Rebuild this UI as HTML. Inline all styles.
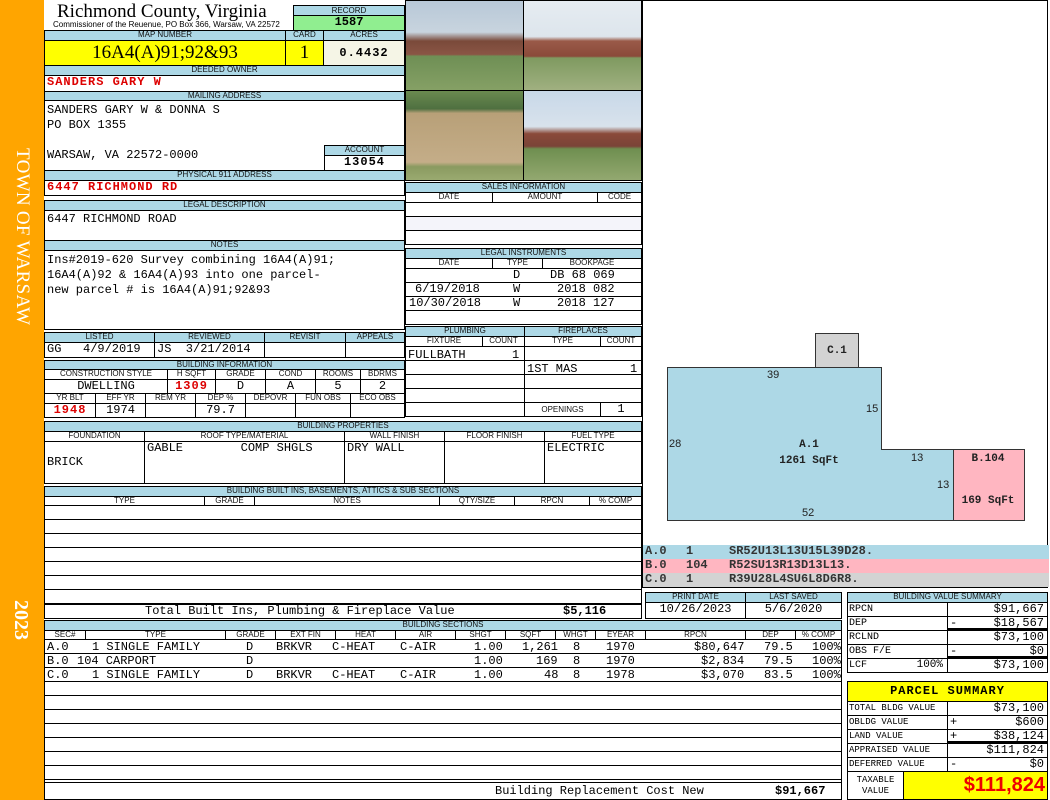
<!DOCTYPE html>
<html><head><meta charset="utf-8"><style>
*{margin:0;padding:0}
body{width:1050px;height:800px;position:relative;background:#fff;overflow:hidden;font-family:"Liberation Sans",sans-serif}
.b{position:absolute;box-sizing:border-box;border:1px solid #000;background:#fff;overflow:hidden;white-space:nowrap}
.h{background:#add8e6;font-size:8px;line-height:8px;text-align:center;color:#111}
.m{font-family:"Liberation Mono",monospace;font-size:12px;line-height:13px;padding-left:2px}
.r{color:#d00;font-weight:bold;letter-spacing:1px}
.c{text-align:center;padding-left:0}
.rt{text-align:right;padding-right:3px}
.t{position:absolute;white-space:nowrap}
</style></head><body>
<div style="position:absolute;left:0;top:0;width:44px;height:800px;background:#ffa500"></div>
<div class="t" style="left:22px;top:148px;transform-origin:0 0;transform:rotate(90deg) translate(0,-11px);font:19px 'Liberation Serif',serif;color:#fff;letter-spacing:0.3px">TOWN OF WARSAW</div>
<div class="t" style="left:32px;top:600px;transform-origin:0 0;transform:rotate(90deg);font:bold 20px 'Liberation Serif',serif;color:#fff">2023</div>

<!-- header -->
<div class="t" style="left:57px;top:1px;font:19px 'Liberation Serif',serif">Richmond County, Virginia</div>
<div class="t" style="left:53px;top:20px;font:8px 'Liberation Sans',sans-serif">Commissioner of the Reuenue, PO Box 366, Warsaw, VA 22572</div>
<div class="b h" style="left:293px;top:5px;width:112px;height:11px;line-height:9px">RECORD</div>
<div class="b m c" style="left:293px;top:15px;width:112px;height:16px;background:#90ee90;font-weight:bold">1587</div>
<div class="b h" style="left:44px;top:30px;width:242px;height:11px">MAP NUMBER</div>
<div class="b h" style="left:285px;top:30px;width:39px;height:11px">CARD</div>
<div class="b h" style="left:323px;top:30px;width:82px;height:11px">ACRES</div>
<div class="b c" style="left:44px;top:40px;width:242px;height:26px;background:#ffff00;font:19px 'Liberation Serif',serif;line-height:24px">16A4(A)91;92&amp;93</div>
<div class="b c" style="left:285px;top:40px;width:39px;height:26px;background:#ffff00;font:19px 'Liberation Serif',serif;line-height:24px">1</div>
<div class="b m c" style="left:323px;top:40px;width:82px;height:26px;background:#f5f5e6;font-weight:bold;line-height:24px;letter-spacing:1px">0.4432</div>
<div class="b h" style="left:44px;top:65px;width:361px;height:11px">DEEDED OWNER</div>
<div class="b m r" style="left:44px;top:75px;width:361px;height:17px">SANDERS GARY W</div>
<div class="b h" style="left:44px;top:91px;width:361px;height:10px">MAILING ADDRESS</div>
<div class="b m" style="left:44px;top:100px;width:361px;height:71px;line-height:15px;padding-top:2px">SANDERS GARY W &amp; DONNA S<br>PO BOX 1355<br><br>WARSAW, VA 22572-0000</div>
<div class="b h" style="left:324px;top:145px;width:81px;height:11px">ACCOUNT</div>
<div class="b m c" style="left:324px;top:155px;width:81px;height:16px;font-weight:bold;letter-spacing:1px">13054</div>
<div class="b h" style="left:44px;top:170px;width:361px;height:11px">PHYSICAL 911 ADDRESS</div>
<div class="b m r" style="left:44px;top:180px;width:361px;height:16px">6447 RICHMOND RD</div>
<div class="b h" style="left:44px;top:200px;width:361px;height:11px">LEGAL DESCRIPTION</div>
<div class="b m" style="left:44px;top:210px;width:361px;height:31px;padding-top:2px">6447 RICHMOND ROAD</div>
<div class="b h" style="left:44px;top:240px;width:361px;height:11px">NOTES</div>
<div class="b m" style="left:44px;top:250px;width:361px;height:80px;line-height:15px;padding-top:2px">Ins#2019-620 Survey combining 16A4(A)91;<br>16A4(A)92 &amp; 16A4(A)93 into one parcel-<br>new parcel # is 16A4(A)91;92&amp;93</div>

<div class="b h" style="left:44px;top:332px;width:111px;height:11px">LISTED</div>
<div class="b h" style="left:154px;top:332px;width:111px;height:11px">REVIEWED</div>
<div class="b h" style="left:264px;top:332px;width:82px;height:11px">REVISIT</div>
<div class="b h" style="left:345px;top:332px;width:60px;height:11px">APPEALS</div>
<div class="b m" style="left:44px;top:342px;width:111px;height:16px">GG&nbsp;&nbsp;&nbsp;4/9/2019</div>
<div class="b m" style="left:154px;top:342px;width:111px;height:16px">JS&nbsp;&nbsp;3/21/2014</div>
<div class="b" style="left:264px;top:342px;width:82px;height:16px"></div>
<div class="b" style="left:345px;top:342px;width:60px;height:16px"></div>

<div class="b h" style="left:44px;top:360px;width:361px;height:10px">BUILDING INFORMATION</div>
<div class="b h" style="left:44px;top:369px;width:124px;height:11px;background:#fff">CONSTRUCTION STYLE</div>
<div class="b h" style="left:167px;top:369px;width:49px;height:11px;background:#fff">H SQFT</div>
<div class="b h" style="left:215px;top:369px;width:51px;height:11px;background:#fff">GRADE</div>
<div class="b h" style="left:265px;top:369px;width:51px;height:11px;background:#fff">COND</div>
<div class="b h" style="left:315px;top:369px;width:46px;height:11px;background:#fff">ROOMS</div>
<div class="b h" style="left:360px;top:369px;width:45px;height:11px;background:#fff">BDRMS</div>
<div class="b m c" style="left:44px;top:379px;width:124px;height:15px">DWELLING</div>
<div class="b m c r" style="left:167px;top:379px;width:49px;height:15px">1309</div>
<div class="b m c" style="left:215px;top:379px;width:51px;height:15px">D</div>
<div class="b m c" style="left:265px;top:379px;width:51px;height:15px">A</div>
<div class="b m c" style="left:315px;top:379px;width:46px;height:15px">5</div>
<div class="b m c" style="left:360px;top:379px;width:45px;height:15px">2</div>
<div class="b h" style="left:44px;top:393px;width:52px;height:11px;background:#fff">YR BLT</div>
<div class="b h" style="left:95px;top:393px;width:51px;height:11px;background:#fff">EFF YR</div>
<div class="b h" style="left:145px;top:393px;width:51px;height:11px;background:#fff">REM YR</div>
<div class="b h" style="left:195px;top:393px;width:51px;height:11px;background:#fff">DEP %</div>
<div class="b h" style="left:245px;top:393px;width:51px;height:11px;background:#fff">DEPOVR</div>
<div class="b h" style="left:295px;top:393px;width:56px;height:11px;background:#fff">FUN OBS</div>
<div class="b h" style="left:350px;top:393px;width:55px;height:11px;background:#fff">ECO OBS</div>
<div class="b m c r" style="left:44px;top:403px;width:52px;height:15px">1948</div>
<div class="b m c" style="left:95px;top:403px;width:51px;height:15px">1974</div>
<div class="b" style="left:145px;top:403px;width:51px;height:15px"></div>
<div class="b m c" style="left:195px;top:403px;width:51px;height:15px">79.7</div>
<div class="b" style="left:245px;top:403px;width:51px;height:15px"></div>
<div class="b" style="left:295px;top:403px;width:56px;height:15px"></div>
<div class="b" style="left:350px;top:403px;width:55px;height:15px"></div>

<!-- building properties -->
<div class="b h" style="left:44px;top:421px;width:598px;height:11px">BUILDING PROPERTIES</div>
<div class="b h" style="left:44px;top:431px;width:101px;height:11px;background:#fff">FOUNDATION</div>
<div class="b h" style="left:144px;top:431px;width:201px;height:11px;background:#fff">ROOF TYPE/MATERIAL</div>
<div class="b h" style="left:344px;top:431px;width:101px;height:11px;background:#fff">WALL FINISH</div>
<div class="b h" style="left:444px;top:431px;width:101px;height:11px;background:#fff">FLOOR FINISH</div>
<div class="b h" style="left:544px;top:431px;width:98px;height:11px;background:#fff">FUEL TYPE</div>
<div class="b m" style="left:44px;top:441px;width:101px;height:43px;padding-top:14px">BRICK</div>
<div class="b m" style="left:144px;top:441px;width:201px;height:43px">GABLE&nbsp;&nbsp;&nbsp;&nbsp;&nbsp;&nbsp;&nbsp;&nbsp;COMP SHGLS</div>
<div class="b m" style="left:344px;top:441px;width:101px;height:43px">DRY WALL</div>
<div class="b" style="left:444px;top:441px;width:101px;height:43px"></div>
<div class="b m" style="left:544px;top:441px;width:98px;height:43px">ELECTRIC</div>

<!-- built ins -->
<div class="b h" style="left:44px;top:486px;width:598px;height:11px">BUILDING BUILT INS, BASEMENTS, ATTICS &amp; SUB SECTIONS</div>
<div class="b h" style="left:44px;top:496px;width:161px;height:10px;background:#fff">TYPE</div>
<div class="b h" style="left:204px;top:496px;width:51px;height:10px;background:#fff">GRADE</div>
<div class="b h" style="left:254px;top:496px;width:186px;height:10px;background:#fff">NOTES</div>
<div class="b h" style="left:439px;top:496px;width:76px;height:10px;background:#fff">QTY/SIZE</div>
<div class="b h" style="left:514px;top:496px;width:76px;height:10px;background:#fff">RPCN</div>
<div class="b h" style="left:589px;top:496px;width:53px;height:10px;background:#fff">% COMP</div>
<div class="b" style="left:44px;top:505px;width:598px;height:100px;background:repeating-linear-gradient(#fff 0,#fff 13px,#000 13px,#000 14px)"></div>
<div class="b m" style="left:44px;top:604px;width:598px;height:15px"><span style="position:absolute;left:100px">Total Built Ins, Plumbing &amp; Fireplace Value</span><span style="position:absolute;left:518px;font-weight:bold">$5,116</span></div>

<!-- building sections -->
<div class="b h" style="left:44px;top:620px;width:798px;height:11px">BUILDING SECTIONS</div>
<div style="position:absolute;left:44px;top:630px;width:798px;height:10px">
<div class="b h" style="left:0;top:0;width:42px;height:10px;background:#fff">SEC#</div>
<div class="b h" style="left:41px;top:0;width:141px;height:10px;background:#fff">TYPE</div>
<div class="b h" style="left:181px;top:0;width:51px;height:10px;background:#fff">GRADE</div>
<div class="b h" style="left:231px;top:0;width:61px;height:10px;background:#fff">EXT FIN</div>
<div class="b h" style="left:291px;top:0;width:61px;height:10px;background:#fff">HEAT</div>
<div class="b h" style="left:351px;top:0;width:61px;height:10px;background:#fff">AIR</div>
<div class="b h" style="left:411px;top:0;width:51px;height:10px;background:#fff">SHGT</div>
<div class="b h" style="left:461px;top:0;width:51px;height:10px;background:#fff">SQFT</div>
<div class="b h" style="left:511px;top:0;width:41px;height:10px;background:#fff">WHGT</div>
<div class="b h" style="left:551px;top:0;width:51px;height:10px;background:#fff">EYEAR</div>
<div class="b h" style="left:601px;top:0;width:101px;height:10px;background:#fff">RPCN</div>
<div class="b h" style="left:701px;top:0;width:51px;height:10px;background:#fff">DEP</div>
<div class="b h" style="left:751px;top:0;width:47px;height:10px;background:#fff">% COMP</div>
</div>
<div class="b" style="left:44px;top:639px;width:798px;height:144px;background:repeating-linear-gradient(#fff 0,#fff 13px,#000 13px,#000 14px)"></div>
<div style="position:absolute;left:44px;top:640px;width:798px;font:12px 'Liberation Mono',monospace;line-height:14px">
<div class="t" style="left:3px;top:0">A.0</div><div class="t" style="left:48px;top:0">1 SINGLE FAMILY</div><div class="t" style="left:202px;top:0">D</div><div class="t" style="left:232px;top:0">BRKVR</div><div class="t" style="left:288px;top:0">C-HEAT</div><div class="t" style="left:356px;top:0">C-AIR</div><div class="t" style="left:430px;top:0">1.00</div><div class="t" style="left:478px;top:0">1,261</div><div class="t" style="left:529px;top:0">8</div><div class="t" style="left:562px;top:0">1970</div><div class="t" style="left:650px;top:0">$80,647</div><div class="t" style="left:720px;top:0">79.5</div><div class="t" style="left:768px;top:0">100%</div>
<div class="t" style="left:3px;top:14px">B.0</div><div class="t" style="left:33px;top:14px">104 CARPORT</div><div class="t" style="left:202px;top:14px">D</div><div class="t" style="left:430px;top:14px">1.00</div><div class="t" style="left:492px;top:14px">169</div><div class="t" style="left:529px;top:14px">8</div><div class="t" style="left:562px;top:14px">1970</div><div class="t" style="left:657px;top:14px">$2,834</div><div class="t" style="left:720px;top:14px">79.5</div><div class="t" style="left:768px;top:14px">100%</div>
<div class="t" style="left:3px;top:28px">C.0</div><div class="t" style="left:48px;top:28px">1 SINGLE FAMILY</div><div class="t" style="left:202px;top:28px">D</div><div class="t" style="left:232px;top:28px">BRKVR</div><div class="t" style="left:288px;top:28px">C-HEAT</div><div class="t" style="left:356px;top:28px">C-AIR</div><div class="t" style="left:430px;top:28px">1.00</div><div class="t" style="left:500px;top:28px">48</div><div class="t" style="left:529px;top:28px">8</div><div class="t" style="left:562px;top:28px">1978</div><div class="t" style="left:657px;top:28px">$3,070</div><div class="t" style="left:720px;top:28px">83.5</div><div class="t" style="left:768px;top:28px">100%</div>
</div>
<div class="b m" style="left:44px;top:782px;width:798px;height:18px;line-height:16px"><span style="position:absolute;left:450px">Building Replacement Cost New</span><span style="position:absolute;left:730px;font-weight:bold">$91,667</span></div>

<!-- photos -->
<div class="b" style="left:405px;top:0;width:119px;height:91px;background:linear-gradient(#b8c8d8 0,#c8d4de 35%,#7a4a3a 45%,#8a5545 60%,#6f8f55 62%,#85a065 100%)"></div>
<div class="b" style="left:523px;top:0;width:119px;height:91px;background:linear-gradient(#e6ecf2 0,#dde5ec 40%,#9a5a48 45%,#8a4a3a 62%,#7f9a60 64%,#a0b080 100%)"></div>
<div class="b" style="left:405px;top:90px;width:119px;height:91px;background:linear-gradient(#6a8a50 0,#4f7040 20%,#b8a078 25%,#c4ad88 80%,#8a9a60 85%,#9aaa70 100%)"></div>
<div class="b" style="left:523px;top:90px;width:119px;height:91px;background:linear-gradient(#c8d8e8 0,#d8e2ec 40%,#8a4a3a 48%,#7a4438 62%,#6f8f50 65%,#93a870 100%)"></div>

<!-- sales -->
<div class="b h" style="left:405px;top:182px;width:237px;height:11px">SALES INFORMATION</div>
<div class="b h" style="left:405px;top:192px;width:88px;height:11px;background:#fff">DATE</div>
<div class="b h" style="left:492px;top:192px;width:106px;height:11px;background:#fff">AMOUNT</div>
<div class="b h" style="left:597px;top:192px;width:45px;height:11px;background:#fff">CODE</div>
<div class="b" style="left:405px;top:202px;width:237px;height:43px;background:linear-gradient(#fff 0,#fff 13px,#000 13px,#000 14px,#f4f4fa 14px,#f4f4fa 27px,#000 27px,#000 28px,#fff 28px)"></div>

<div class="b h" style="left:405px;top:248px;width:237px;height:11px">LEGAL INSTRUMENTS</div>
<div class="b h" style="left:405px;top:258px;width:88px;height:11px;background:#fff">DATE</div>
<div class="b h" style="left:492px;top:258px;width:51px;height:11px;background:#fff">TYPE</div>
<div class="b h" style="left:542px;top:258px;width:100px;height:11px;background:#fff">BOOKPAGE</div>
<div class="b" style="left:405px;top:268px;width:237px;height:57px;background:repeating-linear-gradient(#fff 0,#fff 13px,#000 13px,#000 14px)"></div>
<div style="position:absolute;left:405px;top:268px;font:12px 'Liberation Mono',monospace;line-height:14px">
<div class="t" style="left:108px;top:0">D</div><div class="t" style="left:145px;top:0">DB 68 069</div>
<div class="t" style="left:10px;top:14px">6/19/2018</div><div class="t" style="left:108px;top:14px">W</div><div class="t" style="left:152px;top:14px">2018 082</div>
<div class="t" style="left:4px;top:28px">10/30/2018</div><div class="t" style="left:108px;top:28px">W</div><div class="t" style="left:152px;top:28px">2018 127</div>
</div>

<div class="b h" style="left:405px;top:326px;width:120px;height:11px">PLUMBING</div>
<div class="b h" style="left:524px;top:326px;width:118px;height:11px">FIREPLACES</div>
<div class="b h" style="left:405px;top:336px;width:78px;height:11px;background:#fff">FIXTURE</div>
<div class="b h" style="left:482px;top:336px;width:43px;height:11px;background:#fff">COUNT</div>
<div class="b h" style="left:524px;top:336px;width:77px;height:11px;background:#fff">TYPE</div>
<div class="b h" style="left:600px;top:336px;width:42px;height:11px;background:#fff">COUNT</div>
<div class="b" style="left:405px;top:346px;width:120px;height:71px;background:repeating-linear-gradient(#fff 0,#fff 13px,#000 13px,#000 14px)"></div>
<div class="b" style="left:524px;top:346px;width:118px;height:57px;background:repeating-linear-gradient(#fff 0,#fff 13px,#000 13px,#000 14px)"></div>
<div class="b h" style="left:524px;top:402px;width:77px;height:15px;background:#fff;line-height:13px">OPENINGS</div>
<div class="b m c" style="left:600px;top:402px;width:42px;height:15px">1</div>
<div class="t" style="left:408px;top:348px;font:12px 'Liberation Mono',monospace">FULLBATH</div>
<div class="t" style="left:512px;top:348px;font:12px 'Liberation Mono',monospace">1</div>
<div class="t" style="left:527px;top:362px;font:12px 'Liberation Mono',monospace">1ST MAS</div>
<div class="t" style="left:630px;top:362px;font:12px 'Liberation Mono',monospace">1</div>

<!-- sketch -->
<div class="b" style="left:642px;top:0;width:406px;height:546px"></div>
<svg style="position:absolute;left:0;top:0" width="1050" height="800">
<rect x="815.5" y="333.5" width="43" height="34" fill="#d3d3d3" stroke="#333"/>
<polygon points="667.5,367.5 881.5,367.5 881.5,449.5 953.5,449.5 953.5,520.5 667.5,520.5" fill="#add8e6" stroke="#333"/>
<rect x="953.5" y="449.5" width="71" height="71" fill="#ffb6c1" stroke="#333"/>
<g font-family="Liberation Sans" font-size="11" fill="#222">
<text x="767" y="378">39</text><text x="866" y="412">15</text><text x="669" y="447">28</text><text x="911" y="461">13</text><text x="937" y="488">13</text><text x="802" y="516">52</text></g>
<g font-family="Liberation Mono" font-size="11" fill="#222" text-anchor="middle" font-weight="bold">
<text x="837" y="353">C.1</text><text x="809" y="447">A.1</text><text x="809" y="463">1261 SqFt</text><text x="988" y="461">B.104</text><text x="988" y="503">169 SqFt</text></g>
</svg>
<div class="b" style="left:642px;top:545px;width:406px;height:43px"></div>
<div class="m" style="position:absolute;left:643px;top:545px;width:404px;height:14px;background:#add8e6;font-weight:bold;color:#333"><span class="t" style="left:2px">A.0</span><span class="t" style="left:43px">1</span><span class="t" style="left:86px">SR52U13L13U15L39D28.</span></div>
<div class="m" style="position:absolute;left:643px;top:559px;width:404px;height:14px;background:#ffb6c1;font-weight:bold;color:#333"><span class="t" style="left:2px">B.0</span><span class="t" style="left:43px">104</span><span class="t" style="left:86px">R52SU13R13D13L13.</span></div>
<div class="m" style="position:absolute;left:643px;top:573px;width:404px;height:14px;background:#d3d3d3;font-weight:bold;color:#333"><span class="t" style="left:2px">C.0</span><span class="t" style="left:43px">1</span><span class="t" style="left:86px">R39U28L4SU6L8D6R8.</span></div>

<div class="b h" style="left:645px;top:592px;width:101px;height:11px">PRINT DATE</div>
<div class="b h" style="left:745px;top:592px;width:97px;height:11px">LAST SAVED</div>
<div class="b m c" style="left:645px;top:602px;width:101px;height:17px">10/26/2023</div>
<div class="b m c" style="left:745px;top:602px;width:97px;height:17px">5/6/2020</div>

<!-- building value summary -->
<div class="b h" style="left:847px;top:592px;width:201px;height:11px">BUILDING VALUE SUMMARY</div>
<div style="position:absolute;left:847px;top:602px;width:201px;font:10px 'Liberation Mono',monospace">
<div class="b" style="left:0;top:0;width:101px;height:15px;padding-left:1px;line-height:13px">RPCN</div><div class="b m rt" style="left:100px;top:0;width:101px;height:15px">$91,667</div>
<div class="b" style="left:0;top:14px;width:101px;height:15px;padding-left:1px;line-height:13px">DEP</div><div class="b m rt" style="left:100px;top:14px;width:101px;height:15px;border-bottom:3px solid #000"><span style="float:left">-</span>$18,567</div>
<div class="b" style="left:0;top:28px;width:101px;height:15px;padding-left:1px;line-height:13px">RCLND</div><div class="b m rt" style="left:100px;top:28px;width:101px;height:15px">$73,100</div>
<div class="b" style="left:0;top:42px;width:101px;height:15px;padding-left:1px;line-height:13px">OBS F/E</div><div class="b m rt" style="left:100px;top:42px;width:101px;height:15px;border-bottom:3px solid #000"><span style="float:left">-</span>$0</div>
<div class="b" style="left:0;top:56px;width:101px;height:15px;padding-left:1px;line-height:13px">LCF<span style="position:absolute;right:4px;font-size:11px">100%</span></div><div class="b m rt" style="left:100px;top:56px;width:101px;height:15px">$73,100</div>
</div>

<!-- parcel summary -->
<div class="b" style="left:847px;top:681px;width:201px;height:21px;background:#ffff00;text-align:center;font:bold 12px 'Liberation Mono',monospace;line-height:19px;letter-spacing:1px">PARCEL SUMMARY</div>
<div style="position:absolute;left:847px;top:701px;width:201px;font:9px 'Liberation Mono',monospace">
<div class="b" style="left:0;top:0;width:101px;height:15px;padding-left:1px;line-height:13px">TOTAL BLDG VALUE</div><div class="b m rt" style="left:100px;top:0;width:101px;height:15px">$73,100</div>
<div class="b" style="left:0;top:14px;width:101px;height:15px;padding-left:1px;line-height:13px">OBLDG VALUE</div><div class="b m rt" style="left:100px;top:14px;width:101px;height:15px"><span style="float:left">+</span>$600</div>
<div class="b" style="left:0;top:28px;width:101px;height:15px;padding-left:1px;line-height:13px">LAND VALUE</div><div class="b m rt" style="left:100px;top:28px;width:101px;height:15px;border-bottom:3px solid #000"><span style="float:left">+</span>$38,124</div>
<div class="b" style="left:0;top:42px;width:101px;height:15px;padding-left:1px;line-height:13px">APPRAISED VALUE</div><div class="b m rt" style="left:100px;top:42px;width:101px;height:15px">$111,824</div>
<div class="b" style="left:0;top:56px;width:101px;height:15px;padding-left:1px;line-height:13px">DEFERRED VALUE</div><div class="b m rt" style="left:100px;top:56px;width:101px;height:15px"><span style="float:left">-</span>$0</div>
<div class="b" style="left:0;top:70px;width:57px;height:29px;text-align:center;line-height:11px;padding-top:3px">TAXABLE<br>VALUE</div>
<div class="b" style="left:56px;top:70px;width:145px;height:29px;background:#ffff00;color:#e00;font:bold 20px 'Liberation Sans',sans-serif;text-align:right;padding-right:2px;line-height:27px">$111,824</div>
</div>
</body></html>
